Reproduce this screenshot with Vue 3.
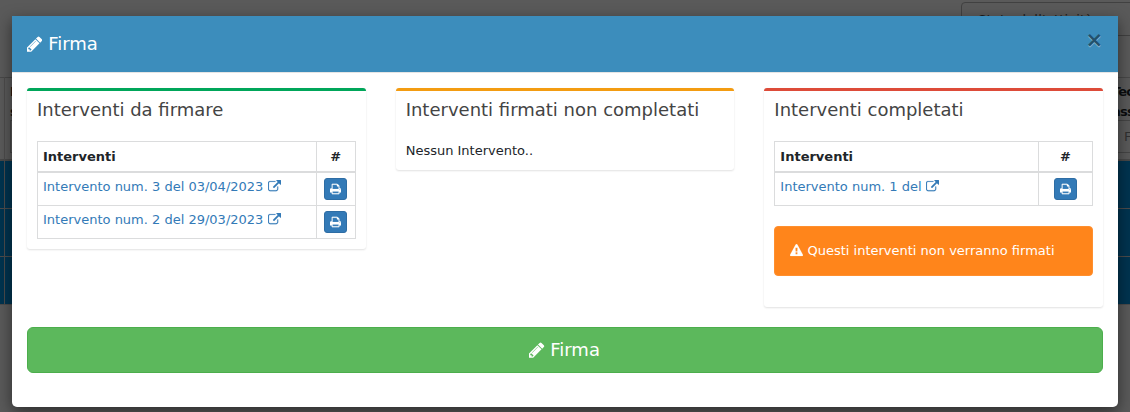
<script setup>
import { h } from 'vue'

const glyphs = {
  pencil: {
    x: 128,
    w: 1536,
    d: 'M491 1536l91-91-235-235-91 91v107h128v128h107zm523-928q0-22-22-22-10 0-17 7l-542 542q-7 7-7 17 0 22 22 22 10 0 17-7l542-542q7-7 7-17zm-54-192l416 416-832 832h-416v-416zm683 96q0 53-37 90l-166 166-416-416 166-165q36-38 90-38 53 0 91 38l235 234q37 39 37 91z',
  },
  external: {
    x: 0,
    w: 1792,
    d: 'M1408 928v320q0 119-84.5 203.5t-203.5 84.5h-832q-119 0-203.5-84.5t-84.5-203.5v-832q0-119 84.5-203.5t203.5-84.5h704q14 0 23 9t9 23v64q0 14-9 23t-23 9h-704q-66 0-113 47t-47 113v832q0 66 47 113t113 47h832q66 0 113-47t47-113v-320q0-14 9-23t23-9h64q14 0 23 9t9 23zm384-864v512q0 26-19 45t-45 19-45-19l-176-176-652 652q-10 10-23 10t-23-10l-114-114q-10-10-10-23t10-23l652-652-176-176q-19-19-19-45t19-45 45-19h512q26 0 45 19t19 45z',
  },
  print: {
    x: 64,
    w: 1664,
    d: 'M448 1536h896v-256h-896v256zm0-640h896v-384h-160q-40 0-68-28t-28-68v-160h-640v640zm1152 64q0-26-19-45t-45-19-45 19-19 45 19 45 45 19 45-19 19-45zm128 0v416q0 13-9.5 22.5t-22.5 9.5h-224v160q0 40-28 68t-68 28h-960q-40 0-68-28t-28-68v-160h-224q-13 0-22.5-9.5t-9.5-22.5v-416q0-79 56.5-135.5t135.5-56.5h64v-544q0-40 28-68t68-28h672q40 0 88 20t76 48l152 152q28 28 48 76t20 88v256h64q79 0 135.5 56.5t56.5 135.5z',
  },
  warning: {
    x: 0,
    w: 1792,
    d: 'M1024 1375v-190q0-14-9.5-23.5t-22.5-9.5h-192q-13 0-22.5 9.5t-9.5 23.5v190q0 14 9.5 23.5t22.5 9.5h192q13 0 22.5-9.5t9.5-23.5zm-2-374l18-459q0-12-10-19-13-11-24-11h-220q-11 0-24 11-10 7-10 21l17 457q0 10 10 16.5t24 6.5h185q14 0 23.5-6.5t10.5-16.5zm-14-934l768 1408q35 63-2 126-17 29-46.5 46t-63.5 17h-1536q-34 0-63.5-17t-46.5-46q-37-63-2-126l768-1408q17-31 47-49t65-18 65 18 47 49z',
  },
}

const Icon = (props) => {
  const g = glyphs[props.name]
  return h(
    'svg',
    { viewBox: `${g.x} 0 ${g.w} 1792`, width: `${g.w / 1792}em`, height: '1em', fill: 'currentColor' },
    [h('path', { d: g.d })],
  )
}
Icon.props = ['name']

const columns = [
  {
    title: 'Interventi da firmare',
    tone: 'success',
    rows: ['Intervento num. 3 del 03/04/2023', 'Intervento num. 2 del 29/03/2023'],
  },
  { title: 'Interventi firmati non completati', tone: 'warning', rows: [] },
  {
    title: 'Interventi completati',
    tone: 'danger',
    rows: ['Intervento num. 1 del'],
    alert: 'Questi interventi non verranno firmati',
  },
]
</script>

<template>
  <div class="screen">
    <div class="page" aria-hidden="true">
      <div class="select">Stato dell'attività</div>
      <div class="grid-head">
        <b class="head-left">I<br />s</b>
        <b class="head-right">Tec<br />ass</b>
        <span class="filter filter-left"></span>
        <span class="filter filter-right">F</span>
      </div>
      <div class="grid-row"></div>
      <div class="grid-row"></div>
      <div class="grid-row"></div>
    </div>

    <section class="modal">
      <header class="modal-header">
        <h4><Icon name="pencil" class="icon" /> Firma</h4>
        <button class="close">×</button>
      </header>
      <div class="modal-body">
        <div class="columns">
          <article v-for="col in columns" :key="col.title" class="box" :class="col.tone">
            <h3>{{ col.title }}</h3>
            <div class="box-body">
              <table v-if="col.rows.length">
                <thead>
                  <tr>
                    <th>Interventi</th>
                    <th class="action">#</th>
                  </tr>
                </thead>
                <tbody>
                  <tr v-for="row in col.rows" :key="row">
                    <td><a>{{ row }} <Icon name="external" class="icon" /></a></td>
                    <td class="action">
                      <button class="print"><Icon name="print" class="icon" /></button>
                    </td>
                  </tr>
                </tbody>
              </table>
              <p v-else>Nessun Intervento..</p>
              <div v-if="col.alert" class="alert"><Icon name="warning" class="icon" /> {{ col.alert }}</div>
            </div>
          </article>
        </div>
        <button class="submit"><Icon name="pencil" class="icon" /> Firma</button>
      </div>
    </section>
  </div>
</template>

<style>
body {
  overflow: hidden;
}
</style>

<style scoped>
* {
  box-sizing: border-box;
}
.screen {
  position: relative;
  height: 412px;
  overflow: hidden;
  background: #5a5a5a;
  font: 13px/19.5px "DejaVu Sans", sans-serif;
  color: #212529;
}
.page {
  position: absolute;
  inset: 0;
  padding-top: 77px;
}
.select {
  position: absolute;
  left: 961px;
  top: 2px;
  width: 190px;
  height: 34px;
  padding: 7px 16px;
  border: 1px solid #414141;
  border-radius: 4px;
  color: #1c1c1c;
  letter-spacing: 0.2px;
}
.grid-head {
  position: relative;
  height: 84px;
  border-top: 1px solid #484848;
  border-bottom: 2px solid #484848;
  color: #0b0d0e;
}
.head-left,
.head-right {
  position: absolute;
  top: 4px;
}
.head-left {
  left: 10px;
}
.head-right {
  left: 1112px;
  letter-spacing: -0.8px;
}
.filter {
  position: absolute;
  top: 42px;
  width: 60px;
  height: 33px;
  padding: 6px;
  border: 1px solid #454545;
  color: #303030;
}
.filter-left {
  left: 10px;
}
.filter-right {
  left: 1117px;
}
.grid-row {
  height: 48px;
  background: #003450;
  border-bottom: 1px solid #4c4b4b;
}
.page::after {
  content: "";
  position: absolute;
  left: 4px;
  top: 77px;
  width: 1px;
  height: 227px;
  background: #4c4b4b;
}
.modal {
  position: relative;
  width: 1106px;
  height: 391px;
  margin: 0 12px;
  top: 16px;
  background: #fff;
  border-radius: 0 0 5px 5px;
  box-shadow: 0 5px 15px rgba(0, 0, 0, 0.5);
}
.modal-header {
  display: flex;
  justify-content: space-between;
  height: 56.5px;
  padding: 15px;
  background: #3c8dbc;
  border-bottom: 1px solid #e5e5e5;
}
h4 {
  margin: 0;
  font-size: 18px;
  font-weight: 400;
  line-height: 26px;
  color: #fff;
}
.close {
  align-self: flex-start;
  margin: -1px 0 0;
  padding: 0;
  border: 0;
  background: none;
  font: 700 21px/20px "DejaVu Sans", sans-serif;
  color: #000;
  opacity: 0.42;
  text-shadow: 0 1px 0 #fff;
}
.modal-body {
  padding: 15.5px 15px;
}
.columns {
  display: grid;
  grid-template-columns: repeat(3, 1fr);
  gap: 30px;
  align-items: start;
  margin-bottom: 20px;
}
.box {
  border-top: 3px solid;
  border-radius: 3px;
  background: #fff;
  box-shadow: 0 1px 2px rgba(0, 0, 0, 0.12);
}
.success {
  border-color: #00a65a;
}
.warning {
  border-color: #f39c12;
}
.danger {
  border-color: #dd4b39;
}
h3 {
  margin: 0;
  padding: 10px 10px 0;
  font-size: 18px;
  font-weight: 400;
  line-height: 18px;
  color: #444;
}
.box-body {
  padding: 22px 10px 10px;
}
p {
  height: 18.5px;
  margin: 0;
}
table {
  width: 100%;
  border-collapse: separate;
  border-spacing: 0;
  table-layout: fixed;
  border-top: 1px solid #dbdcdd;
  border-left: 1px solid #dbdcdd;
}
th,
td {
  height: 33px;
  padding: 4px 5px 5px;
  border-right: 1px solid #dbdcdd;
  border-bottom: 1px solid #dbdcdd;
  text-align: left;
  vertical-align: top;
}
th {
  height: 31px;
  padding: 5px 5px 4px;
  border-bottom-width: 2px;
}
.action {
  width: 39px;
  text-align: center;
}
td.action {
  padding: 5px;
  line-height: 0;
}
.danger .action {
  width: 54px;
}
a {
  color: #337ab7;
}
.icon {
  display: inline-block;
  vertical-align: -0.143em;
}
a .icon,
.alert .icon {
  vertical-align: -0.143em;
  stroke: currentColor;
  stroke-width: 20px;
}
.print {
  display: inline-flex;
  align-items: center;
  justify-content: center;
  width: 23px;
  height: 22px;
  padding: 0;
  border: 1px solid #2e6da4;
  border-radius: 3px;
  background: #337ab7;
  color: #fff;
  font-size: 12px;
}
.print .icon {
  stroke: currentColor;
  stroke-width: 20px;
}
.alert {
  height: 50px;
  margin: 20px 0 21px;
  padding: 14px 15px;
  border: 1px solid #ff8f2e;
  border-radius: 4px;
  background: #ff851b;
  color: #fff;
}
.submit {
  display: block;
  width: 100%;
  height: 46px;
  padding: 0;
  border: 1px solid #4cae4c;
  border-radius: 6px;
  background: #5cb85c;
  color: #fff;
  font: 18px/24px "DejaVu Sans", sans-serif;
}
.submit .icon {
  margin-left: -1px;
}
</style>
